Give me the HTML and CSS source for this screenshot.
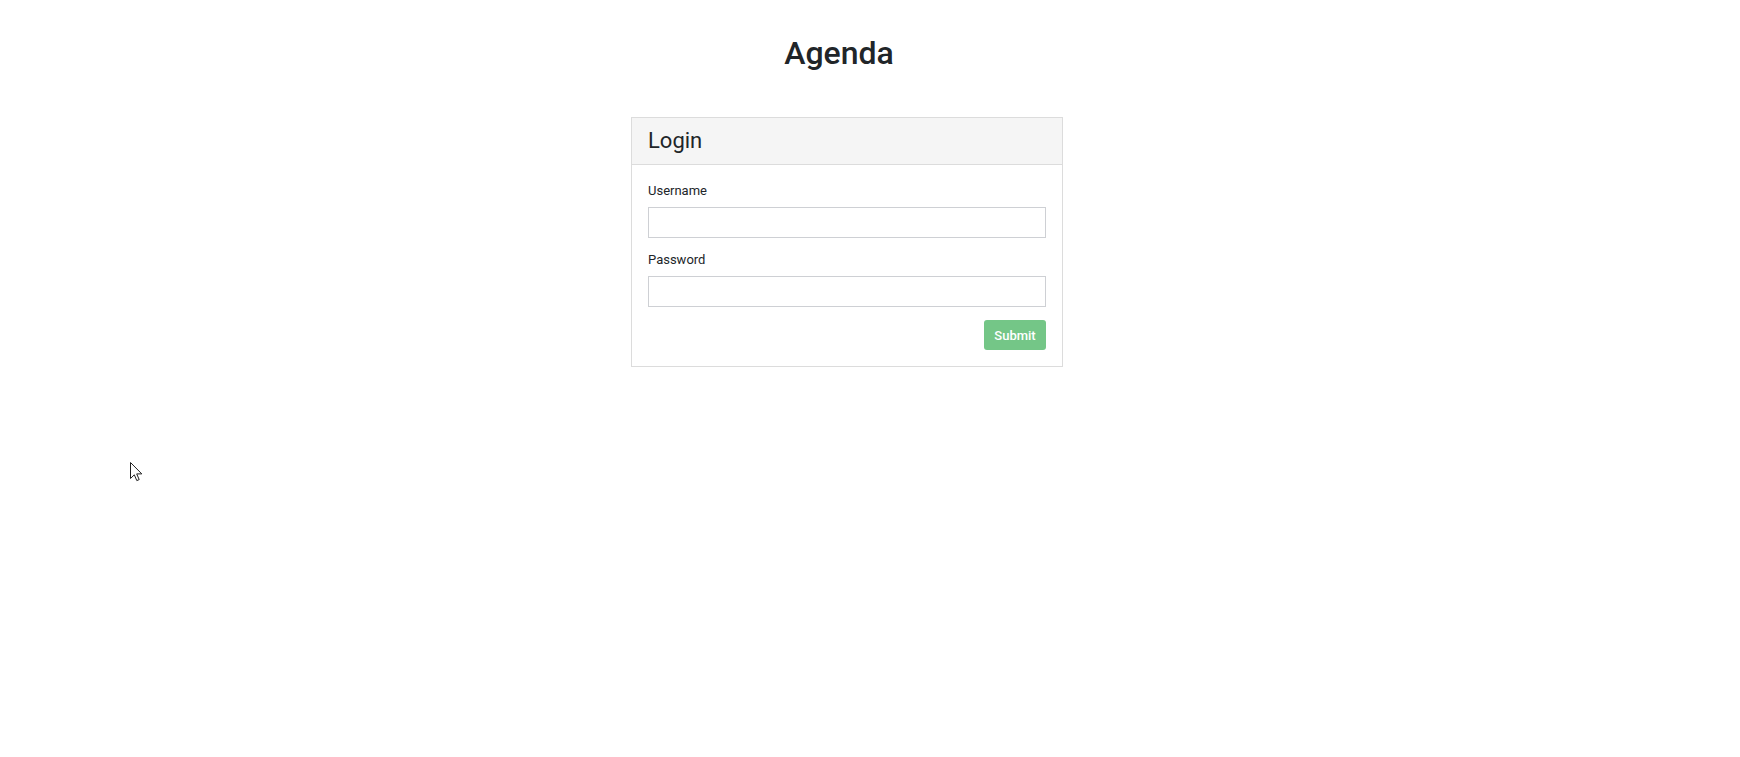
FILE: index.html
```html
<!DOCTYPE html>
<html lang="en">
<head>
<meta charset="utf-8">
<title>Agenda</title>
<link rel="stylesheet" href="styles.css">
</head>
<body>
<div class="wrap">
  <h1 class="title">Agenda</h1>
  <div class="card">
    <div class="card-header">Login</div>
    <form class="card-body">
      <label class="label" for="u">Username</label>
      <input class="input" id="u" type="text">
      <label class="label second" for="p">Password</label>
      <input class="input" id="p" type="password">
      <div class="actions"><button class="btn" type="button">Submit</button></div>
    </form>
  </div>
</div>
<svg class="cursor" width="13" height="20" viewBox="0 0 13 20"><path d="M0.5 0.5 L0.5 16.5 L4.3 12.8 L6.8 18.6 L9.2 17.6 L6.7 11.9 L11.8 11.9 Z" fill="#fff" stroke="#222" stroke-width="1" stroke-linejoin="miter"/></svg>
</body>
</html>
```
FILE: styles.css
```css
html, body { margin: 0; padding: 0; background: #fff; }
body { font-family: Roboto, "Liberation Sans", sans-serif; color: #212529; width: 1740px; height: 757px; overflow: hidden; position: relative; }
.wrap { margin-left: 631px; width: 432px; padding-top: 34px; display: flex; flex-direction: column; }
.title { margin: 0 0 45px 0; width: 416px; text-align: center; font-size: 32px; line-height: 38px; font-weight: 500; color: #212529; }
.card { border: 1px solid #dcdcdc; background: #fff; }
.card-header { background: #f5f5f5; border-bottom: 1px solid #dcdcdc; padding: 10px 16px 10px; font-size: 22px; line-height: 26px; font-weight: 400; }
.card-body { padding: 16px; display: flex; flex-direction: column; margin: 0; }
.label { font-size: 13px; line-height: 20px; margin-bottom: 6px; color: #212529; }
.label.second { margin-top: 12px; }
.input { box-sizing: border-box; height: 31px; width: 100%; border: 1px solid #ced0d4; border-radius: 0; margin: 0; padding: 0 8px; font: inherit; }
.actions { display: flex; justify-content: flex-end; margin-top: 13px; }
.btn { box-sizing: border-box; width: 62px; height: 30px; border: none; border-radius: 3px; background: #74c687; color: #fff; font-family: Roboto, "Liberation Sans", sans-serif; font-weight: 500; font-size: 13px; padding: 0; }
.cursor { position: absolute; left: 130px; top: 462px; }
```
